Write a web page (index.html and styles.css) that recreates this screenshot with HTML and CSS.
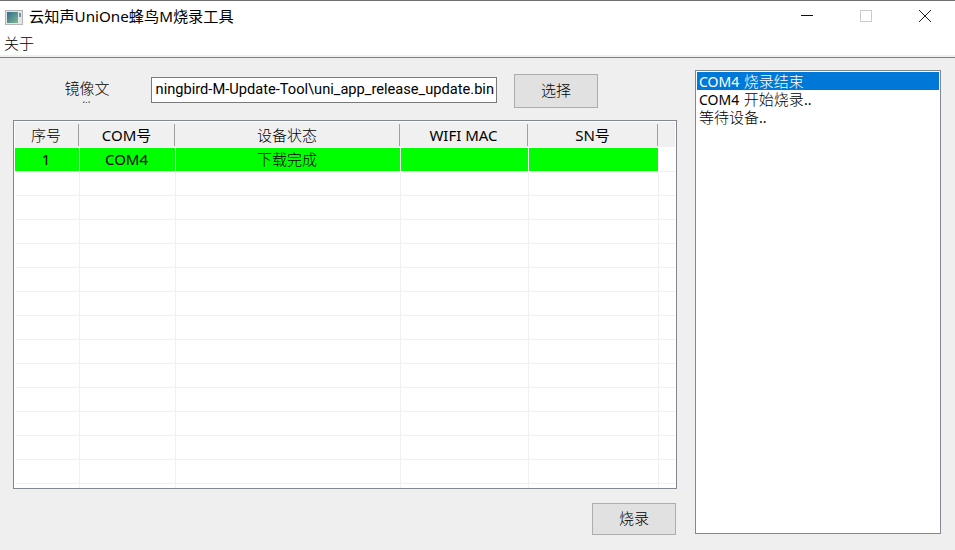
FILE: index.html
```html
<!DOCTYPE html>
<html lang="zh-CN">
<head>
<meta charset="utf-8">
<title>云知声UniOne蜂鸟M烧录工具</title>
<link rel="stylesheet" href="styles.css">
</head>
<body>
<div class="app">
  <header class="titlebar">
    <svg class="app-icon" width="18" height="15" viewBox="0 0 18 15">
      <defs><linearGradient id="g" x1="0" y1="0" x2="1" y2="1"><stop offset="0" stop-color="#2f6a90"/><stop offset="1" stop-color="#7fbb8f"/></linearGradient></defs>
      <rect x="0.5" y="0.5" width="17" height="14" fill="#e6e6e6" stroke="#b4b4b4"/>
      <rect x="2" y="2" width="11" height="11" fill="url(#g)"/>
      <rect x="14" y="3" width="2" height="4" fill="#6f93a8"/>
    </svg>
    <span class="title">云知声UniOne蜂鸟M烧录工具</span>
    <div class="controls">
      <span class="ctl"><svg width="12" height="12" viewBox="0 0 12 12"><path d="M0 5.5H12" stroke="#111" fill="none"/></svg></span>
      <span class="ctl"><svg width="12" height="12" viewBox="0 0 12 12"><rect x="0.5" y="0.5" width="11" height="11" stroke="#ccc" fill="none"/></svg></span>
      <span class="ctl"><svg width="12" height="12" viewBox="0 0 12 12"><path d="M0 0L12 12M12 0L0 12" stroke="#222" fill="none"/></svg></span>
    </div>
  </header>
  <nav class="menubar"><span class="zh">关于</span></nav>
  <main class="body">
    <section class="left">
      <div class="toolbar">
        <label class="file-label zh">镜像文件</label>
        <div class="path"><span>ningbird-M-Update-Tool\uni_app_release_update.bin</span></div>
        <button class="btn zh">选择</button>
      </div>
      <div class="table">
        <div class="row head">
          <div class="zh">序号</div><div>COM号</div><div class="zh">设备状态</div><div>WIFI MAC</div><div>SN号</div><div></div>
        </div>
        <div class="row data ok">
          <div>1</div><div>COM4</div><div class="zh">下载完成</div><div></div><div></div><div class="rest"></div>
        </div>
        <div class="row data"><div></div><div></div><div></div><div></div><div></div><div></div></div>
        <div class="row data"><div></div><div></div><div></div><div></div><div></div><div></div></div>
        <div class="row data"><div></div><div></div><div></div><div></div><div></div><div></div></div>
        <div class="row data"><div></div><div></div><div></div><div></div><div></div><div></div></div>
        <div class="row data"><div></div><div></div><div></div><div></div><div></div><div></div></div>
        <div class="row data"><div></div><div></div><div></div><div></div><div></div><div></div></div>
        <div class="row data"><div></div><div></div><div></div><div></div><div></div><div></div></div>
        <div class="row data"><div></div><div></div><div></div><div></div><div></div><div></div></div>
        <div class="row data"><div></div><div></div><div></div><div></div><div></div><div></div></div>
        <div class="row data"><div></div><div></div><div></div><div></div><div></div><div></div></div>
        <div class="row data"><div></div><div></div><div></div><div></div><div></div><div></div></div>
        <div class="row data"><div></div><div></div><div></div><div></div><div></div><div></div></div>
        <div class="row data"><div></div><div></div><div></div><div></div><div></div><div></div></div>
        <div class="row data last"><div></div><div></div><div></div><div></div><div></div><div></div></div>
      </div>
      <div class="actions"><button class="btn burn zh">烧录</button></div>
    </section>
    <aside class="log">
      <div class="log-item selected">COM4 <span class="cjk">烧录结束</span></div>
      <div class="log-item">COM4 <span class="cjk">开始烧录</span>..</div>
      <div class="log-item"><span class="cjk">等待设备</span>..</div>
    </aside>
  </main>
</div>
</body>
</html>
```
FILE: styles.css
```css
* { box-sizing: border-box; }
html, body { margin: 0; height: 100%; }
body {
  background: #efefef;
  font-family: "Noto Sans", "Noto Sans CJK SC", sans-serif;
  font-size: 15px;
  color: #000;
  overflow: hidden;
}
.zh { font-weight: 300; }
.app { width: 955px; height: 550px; display: flex; flex-direction: column; }

.titlebar {
  height: 31px;
  flex: none;
  background: #fff;
  border-top: 1px solid #707070;
  display: flex;
  align-items: center;
  padding-left: 5px;
}
.app-icon { display: block; flex: none; margin-top: 2px; }
.title { margin-left: 6px; font-size: 15.2px; line-height: 20px; }
.controls { margin-left: auto; display: flex; padding-right: 1px; }
.ctl { width: 58.67px; height: 30px; display: flex; align-items: center; justify-content: center; }
.ctl svg { display: block; }

.menubar {
  height: 27px;
  flex: none;
  background: linear-gradient(#fff calc(100% - 2px), #f0f0f0 0);
  padding: 2px 0 0 4px;
  line-height: 20px;
  border-bottom: 1px solid #808080;
}

.body { flex: 1; display: flex; padding: 12px 14px 0 13px; }
.left { width: 664px; flex: none; display: flex; flex-direction: column; }

.toolbar { height: 50px; display: flex; align-items: flex-start; padding-top: 4px; flex: none; }
.file-label {
  width: 48px;
  height: 25px;
  margin: 4px 0 0 50px;
  line-height: 20px;
  text-align: center;
  overflow: hidden;
  word-break: break-all;
}
.path {
  width: 346px;
  height: 26px;
  margin: 3px 0 0 40px;
  background: #fff;
  border: 1px solid #7a7a7a;
  padding: 0 2px;
  line-height: 23px;
  overflow: hidden;
  display: flex;
  justify-content: flex-end;
  white-space: nowrap;
  font-family: Roboto, "Noto Sans CJK SC", sans-serif;
  font-size: 14.65px;
}
.btn {
  font-family: inherit;
  font-size: inherit;
  color: #000;
  width: 84px;
  height: 34px;
  margin-left: 17px;
  padding: 0 0 3px;
  background: #e1e1e1;
  border: 1px solid #adadad;
  border-radius: 0;
}

.table {
  height: 369px;
  flex: none;
  background: #fff;
  border: 1px solid #83878f;
  padding: 1px 1px 0 1px;
  overflow: hidden;
}
.row { display: grid; grid-template-columns: 65px 96px 225px 128px 130px 1fr; }
.head { height: 25px; background: #f0f0f0; margin-bottom: 1px; }
.head div {
  text-align: center;
  margin-top: 2px;
  height: 22px;
  line-height: 22px;
  border-right: 1px solid #a0a0a0;
  position: relative;
  left: -1px;
}
.head div:last-child { border-right: 0; }
.data { height: 24px; border-bottom: 1px solid #f0f0f0; }
.data div { border-right: 1px solid #f0f0f0; text-align: center; line-height: 23px; padding-right: 2px; }
.data div:last-child { border-right: 0; }
.data.ok div { background: #0f0; border-right-color: #fff; }
.data.ok .rest { background: #fff; }
.data.last { border-bottom: 0; height: 4px; }

.actions { display: flex; justify-content: flex-end; padding-top: 14px; }
.burn { height: 32px; margin-right: 1px; }

.log {
  width: 246px;
  height: 464px;
  flex: none;
  margin-left: 18px;
  background: #fff;
  border: 1px solid #83878f;
  padding: 1px;
  font-size: 14px;
  word-spacing: 1px;
}
.log-item { height: 18px; line-height: 18px; padding-left: 2px; }
.log-item .cjk { font-size: 15px; font-weight: 300; }
.log-item.selected { background: #0078d7; color: #fff; }
```
